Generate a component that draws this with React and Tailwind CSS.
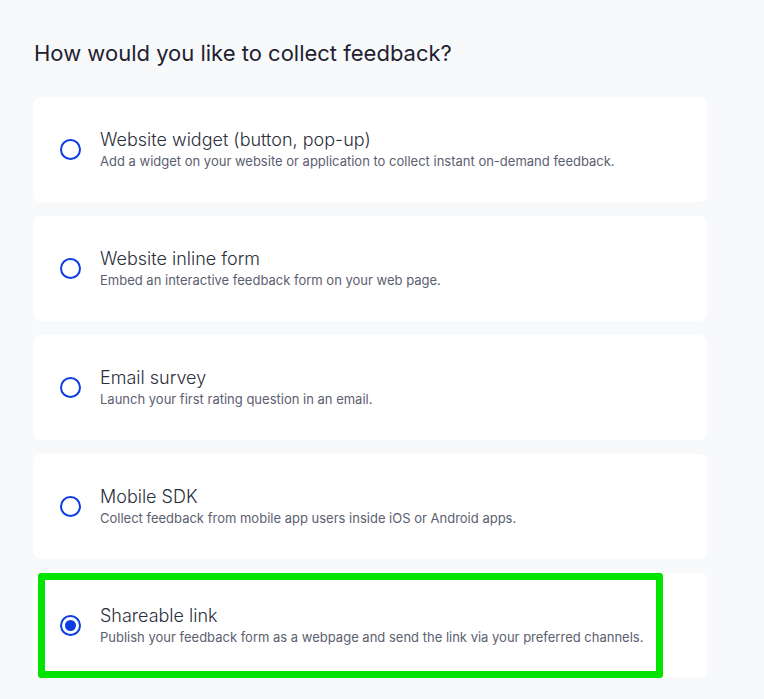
import React from "react";

const options = [
  {
    id: "widget",
    title: "Website widget (button, pop-up)",
    desc: "Add a widget on your website or application to collect instant on-demand feedback.",
  },
  {
    id: "inline",
    title: "Website inline form",
    desc: "Embed an interactive feedback form on your web page.",
  },
  {
    id: "email",
    title: "Email survey",
    desc: "Launch your first rating question in an email.",
  },
  {
    id: "sdk",
    title: "Mobile SDK",
    desc: "Collect feedback from mobile app users inside iOS or Android apps.",
  },
  {
    id: "link",
    title: "Shareable link",
    desc: "Publish your feedback form as a webpage and send the link via your preferred channels.",
  },
];

function Radio({ checked }) {
  return (
    <span className="flex h-[21px] w-[21px] shrink-0 items-center justify-center rounded-full border-[2.5px] border-[#0b3de0]">
      {checked && <span className="h-[11px] w-[11px] rounded-full bg-[#0b3de0]" />}
    </span>
  );
}

export default function App() {
  const selected = "link";
  return (
    <div
      className="min-h-[699px] w-[764px] bg-[#f8f9fb] pl-[33px] pt-[38px]"
      style={{ fontFamily: "Inter, 'Noto Sans', sans-serif" }}
    >
      <h2 className="ml-px text-[22px] leading-[30px] text-[#1e2230]">
        How would you like to collect feedback?
      </h2>
      <div className="mt-[29px] flex w-[674px] flex-col gap-[14px]">
        {options.map((o) => (
          <div
            key={o.id}
            className="relative flex h-[105px] items-center rounded-[8px] bg-white pl-[27px]"
          >
            <Radio checked={o.id === selected} />
            <div className="ml-[19px] flex flex-col">
              <span className="text-[18px] font-light leading-[24px] text-[#2c2f3c]">{o.title}</span>
              <span className="text-[13px] leading-[19px] text-[#5b6070]">{o.desc}</span>
            </div>
            {o.id === selected && (
              <div className="pointer-events-none absolute left-[5px] top-0 h-[105px] w-[625px] rounded-[3px] border-[7px] border-[#00e400]" />
            )}
          </div>
        ))}
      </div>
    </div>
  );
}
